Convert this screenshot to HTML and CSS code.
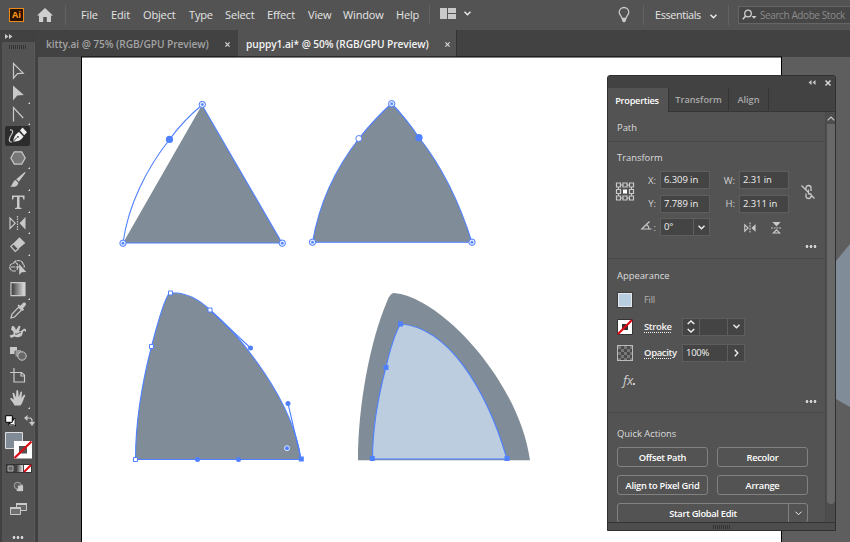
FILE: index.html
```html
<!DOCTYPE html>
<html lang="en">
<head>
<meta charset="utf-8">
<title>Illustrator workspace</title>
<link rel="stylesheet" href="styles.css">
</head>
<body>
<div class="app">
  <header class="menubar">
    <span class="logo">Ai</span>
    <svg class="home" viewBox="0 0 16 14"><path d="M8 0 0 7.6h2V14h4.2V9h3.6v5H14V7.6h2z"/></svg>
    <i class="sep"></i>
    <nav class="menu"><span>File</span><span>Edit</span><span>Object</span><span>Type</span><span>Select</span><span>Effect</span><span>View</span><span>Window</span><span>Help</span></nav>
    <i class="sep"></i>
    <svg class="arrange" viewBox="0 0 16 11"><path d="M0 0h7v11H0zM8 0h8v5H8zM8 6h8v5H8z"/></svg>
    <svg class="chev" viewBox="0 0 7 5"><path d="m.5.7 3 3 3-3"/></svg>
    <svg class="bulb" viewBox="0 0 12 16"><path d="M4 11.5C4 9 1.2 8 1.2 5.3a4.8 4.8 0 0 1 9.6 0C10.800 8 8 9 8 11.500z" fill="none" stroke="#c9c9c9" stroke-width="1.300"/><path d="M4 11h4v3L6 15.500 4 14z" fill="#c9c9c9"/></svg>
    <i class="sep"></i>
    <span class="workspace">Essentials</span>
    <svg class="chev wide" viewBox="0 0 7 5"><path d="m.5.7 3 3 3-3"/></svg>
    <i class="sep"></i>
    <div class="search">
      <svg viewBox="0 0 15 12"><circle cx="6" cy="4.500" r="3.300" fill="none" stroke="#d0d0d0" stroke-width="1.300"/><path d="M3.700 7 .8 10.300" stroke="#d0d0d0" stroke-width="1.500"/><path d="M9.500 7h5L12 9.700z" fill="#d0d0d0"/></svg>
      <span>Search Adobe Stock</span>
    </div>
  </header>

  <div class="workarea">
    <aside class="toolbar">
      <div class="toolhead"><svg viewBox="0 0 8 5"><path d="m0 0 3.500 2.500L0 5zm4 0 3.500 2.500L4 5z"/></svg></div>
      <div class="toolbody">
        <i class="grip"></i>
        <div class="tools">
          <span><svg viewBox="0 0 20 20"><path class="l" d="M5.500 2.500v14.700l4-4.500 5.700-.5z"/></svg></span>
          <span class="more"><svg viewBox="0 0 20 20"><path d="M5 2.500V17.500l4.300-5 6.500-.5z"/></svg></span>
          <span class="more"><svg viewBox="0 0 20 20"><path class="l" d="M5.500 17.500V3.500l9.700 10.500"/></svg></span>
          <span class="on"><svg viewBox="0 0 20 20"><path class="l" d="M2 4c3.500-.5 3 2.500 1.500 4.500C1 12 0 16 4 16"/><path d="M5 15.500c1-5 2.500-7.500 6-9.500l4.500 4.500c-2.500 4-5 5-10.500 5z"/><path d="m12 4.500 2.500-3 4.500 4.800-2.800 3z"/><path d="m5 15.500 4-4" stroke="#303030"/><circle cx="10" cy="10.800" r=".9" fill="#303030"/></svg></span>
          <span class="more"><svg viewBox="0 0 20 20"><path class="l" d="M2.800 10 6.300 3.900h7.400l3.500 6.100-3.500 6.100H6.300z" style="fill:#777"/></svg></span>
          <span class="more"><svg viewBox="0 0 20 20"><path d="m16.800 2 .8.800-6.800 9-2.600-2.600zM7.500 10l2.800 2.700c-.5 4-4 4.500-8.300 4 2.500-1 2.500-5.500 5.500-6.700z"/></svg></span>
          <span class="more"><svg viewBox="0 0 20 20"><path d="M4 3.500h12.500V7.500H15.300L14.600 5h-3.100v10.500l2 .5v1H7v-1l2-.5V5H5.900l-.7 2.500H4z"/></svg></span>
          <span class="more"><svg viewBox="0 0 20 20"><path class="l" d="M2 5v10.500L7.200 10.200z"/><path class="l" d="M9.500 3v14" stroke-dasharray="1.500 1"/><path d="M17.500 4v12.500l-6-6.300z"/></svg></span>
          <span class="more"><svg viewBox="0 0 20 20"><path d="m11.500 2.200 5.800 5.800-6.500 5.500-5.300-5.300z"/><path class="l" d="M5.500 8.800 2.800 11.500l4.500 5 3.200-2.800z"/></svg></span>
          <span><svg viewBox="0 0 20 20"><path class="l" d="M8 14H5.500a3.800 3.800 0 0 1 0-7.600C7.500 2 14.500 3 15 7c1.500 1 1.500 2 1 3.500M3 10h10M7.500 5.500c3 1 3 5 1 8" stroke-dasharray="4 .6"/><path d="M11.200 7v11l2.500-2.800 4.500-.3z"/></svg></span>
          <span class="more"><svg viewBox="0 0 20 20"><defs><linearGradient id="g"><stop stop-color="#333"/><stop offset="1" stop-color="#e5e5e5"/></linearGradient></defs><path d="M3 3.700h14v13H3z" fill="url(#g)" stroke="#c9c9c9" stroke-width="1.200" style="fill:url(#g)"/></svg></span>
          <span><svg viewBox="0 0 20 20"><path class="l" d="m3 17 1-4 6.700-6.800 2.800 2.700L6.500 16z"/><path d="m9.500 4.500 1.200-1 1.600 1.200L15 2c2-1.500 4 .8 2.500 2.500L15 7.300l1 1.500-1.200 1.200z"/></svg></span>
          <span><svg viewBox="0 0 20 20"><path d="M4 4c3 0 3 2 4 4l3-4.500 1.500 1L11 9c2 1 3-1 4.500-2 2-1 3.500 1 2 3l-.7-1c-1.300-1-2 1-2.300 3-.8 3.500-5.500 4-8 2.500L3 16l-1.500-2.500 4-1.300C6 11 5.500 9 3 7.500z"/><path d="M7 12c3 1 4-2 6-1.500" stroke="#535353"/></svg></span>
          <span><svg viewBox="0 0 20 20"><path d="M2 3h7v7H2z"/><path d="M7 6h6l1 7H7z" fill="#999"/><path d="M7 7v6h3" stroke="#535353" fill="none"/><circle cx="14" cy="12" r="4.200" stroke="#c9c9c9" style="fill:#686868"/></svg></span>
          <span><svg viewBox="0 0 20 20"><path class="l" d="M2 6.500h4M6 2v4.500m0 0h7.500L16.500 9v7H6zM13 6.500V10h3.500"/></svg></span>
          <span class="more"><svg viewBox="0 0 20 20"><path d="M6.500 17.500C5 14 3 12.500 2 10.500c.6-1 1.800-.6 3.800 1.200L4.500 5.500c.3-1.200 1.500-1 1.800 0L8 9.500 8.300 3c.3-1.200 1.700-1.200 1.900 0l.6 6.200L12.500 4c.5-1 1.800-.6 1.600.6L13.400 10l2.300-3c.8-.8 2 0 1.400 1-2 3.500-2 6.500-4.600 9.500z"/></svg></span>
        </div>
        <div class="defaults">
          <svg viewBox="0 0 11 11"><path d="M4.500 4.500h5.500v5.500H4.500z" stroke="#000" stroke-width="2" style="fill:#fff"/><path d="M.7.700h6.600v6.600H.7z" stroke="#000" style="fill:#fff"/><path d="M9.800 4v6H4" stroke="#ddd" style="fill:none"/></svg>
          <svg viewBox="0 0 11 11"><path class="l" d="M3 3h2.500Q8 3 8 5.500V8"/><path d="M3.500 0v6L0 3zM5 7h6l-3 4z"/></svg>
        </div>
        <svg class="swatches" viewBox="0 0 28 28"><path d="M.5.500h17v16H.5z" stroke="#ddd" style="fill:#808b97"/><path d="M9 9h18v17.500H9z" style="fill:#fff"/><path d="M14 14h8v7.500h-8z" style="fill:#535353"/><path d="M9.500 26 26.500 9.500" stroke="#e00a14" stroke-width="2.200"/></svg>
        <svg class="modes" viewBox="0 0 26 9"><path d="M.5.500h25v8H.5z" stroke="#333" style="fill:#414141"/><path d="M2 2h5v5H2z" stroke="#aaa" style="fill:#666"/><path d="M10 1h7v7h-7z" style="fill:url(#g)"/><path d="M18 1h7v7h-7z" style="fill:#fff"/><path d="m18 8 7-7" stroke="#e00a14" stroke-width="2"/></svg>
        <svg class="draw" viewBox="0 0 12 12"><path d="M4 4h6.500v7H4z"/><circle cx="5" cy="5" r="3.700" stroke="#aaa" style="fill:#606060"/><path d="M5.500 5h5.500v6H5.500z"/></svg>
        <svg class="screen" viewBox="0 0 17 12"><path d="M6.500.500h10v7h-10z" stroke="#c9c9c9" style="fill:#666"/><path d="M.5 4.500h10v7H.5z" stroke="#c9c9c9" style="fill:#707070"/><path d="M0 4h11v2H0zM6 0h11v2H6z"/></svg>
        <i class="dots"></i>
      </div>
    </aside>

    <main class="document">
      <div class="doctabs">
        <div class="doctab"><span>kitty.ai @ 75% (RGB/GPU Preview)</span><svg viewBox="0 0 6 6"><path d="m.5.500 5 5m0-5-5 5"/></svg></div>
        <div class="doctab current"><span>puppy1.ai* @ 50% (RGB/GPU Preview)</span><svg viewBox="0 0 6 6"><path d="m.5.500 5 5m0-5-5 5"/></svg></div>
      </div>
      <svg class="canvas" viewBox="38 57 812 485">
        <defs>
          <g id="corner"><circle r="3.200" fill="#dce6ff" stroke="#4f80ff" stroke-width="1"/><circle r="1.300" fill="#4f80ff"/></g>
          <circle id="dot" r="2.500" fill="#4f80ff"/>
          <path id="sq" d="M-2.500-2.500h5v5h-5z" fill="#4f80ff"/>
          <path id="osq" d="M-2-2h4v4h-4z" fill="#fff" stroke="#4f80ff"/>
        </defs>
        <path d="M38 57h812v485H38z" fill="#5e5e5e"/>
        <path d="M81 56.500h701V542h-701z" fill="#000"/>
        <path d="M82 57.500h699V542H82z" fill="#fff"/>
        <path d="M850 244 836 261v138l14 8z" fill="#808d98"/>
        <g>
          <path class="grey" d="M202 105 123 243h159z"/>
          <path class="edge" d="M123 243h159L202 105C190 115 180 125 169.500 139.500 147 168 128 205 123 243z"/>
          <use href="#corner" x="202.300" y="104.500"/><use href="#corner" x="123" y="243.200"/><use href="#corner" x="282.300" y="243.200"/><circle cx="169.500" cy="139.400" r="3.600" fill="#4f80ff"/>
        </g>
        <g>
          <path class="grey edge" d="M312.500 242.300C319 204 335 169 359 138.500 368 127 379 115 391.500 103.500 401 113 409 123 419 137.500 443 168 460 204 472 242.300z"/>
          <use href="#corner" x="391.700" y="103.700"/><use href="#corner" x="312.500" y="242.200"/><use href="#corner" x="472" y="242.200"/><circle cx="419" cy="137.700" r="3.600" fill="#4f80ff"/><circle cx="358.800" cy="138.500" r="3" fill="#fff" stroke="#4f80ff"/>
        </g>
        <g>
          <path class="grey edge" d="M135.500 459.500C135.500 425 141 387 151.500 346.500 157 325 163 305 167.500 296Q169 292.500 173 292.700C187 293 200 300 210 310 241 336 293 401 301 459.500z"/>
          <path class="edge" d="m210 310 40.500 38M301 459l-13-55.500"/>
          <use href="#osq" x="170.500" y="293"/><use href="#osq" x="210" y="310"/><use href="#osq" x="151.500" y="346.500"/><use href="#osq" x="135.500" y="459.500"/>
          <use href="#sq" x="301.300" y="459"/><use href="#dot" x="250.500" y="348"/><use href="#dot" x="288" y="403.500"/><use href="#dot" x="197.500" y="459.500"/><use href="#dot" x="238.500" y="459.500"/>
          <circle cx="287" cy="448.200" r="2.500" fill="#4f80ff" stroke="#dce6ff"/>
        </g>
        <g>
          <path class="grey" d="M358 460.300C358 406 370 341 387 301.500Q390 293 394 293C441 297 519 381 530 460.300z"/>
          <path class="pale edge" d="M372.500 459C372.500 430 377 401 386 367 390 350 394 335 400.500 324 447 327 486 387 507 459z"/>
          <use href="#sq" x="400.500" y="324"/><use href="#sq" x="386" y="367.500"/><use href="#sq" x="372.300" y="458.500"/><use href="#sq" x="507" y="458.500"/>
        </g>
      </svg>

      <section class="panel">
        <div class="panelhead">
          <svg class="collapse" viewBox="0 0 8 5"><path d="M3.500 0 .5 2.500l3 2.500zM7.500 0l-3 2.500 3 2.500z"/></svg>
          <svg class="close" viewBox="0 0 6 6"><path d="m.5.500 5 5m0-5-5 5"/></svg>
        </div>
        <div class="paneltabs"><span class="active">Properties</span><span>Transform</span><span>Align</span></div>
        <div class="panelbody">
          <div class="sections">
            <div class="sect path"><h3>Path</h3></div>
            <div class="sect transform">
              <h3>Transform</h3>
              <div class="tgrid">
                <svg class="refpoint" viewBox="0 0 18 19"><path class="l" d="M.5 1h4v4h-4zM7 1h4v4H7zM13.500 1h4v4h-4zM.5 7.500h4v4h-4zM13.500 7.500h4v4h-4zM.5 14h4v4h-4zM7 14h4v4H7zM13.500 14h4v4h-4zM4.500 3H7m4 0h2.500m-9 13H7m4 0h2.500m-11-11v2.500m0 4V14m13-9v2.500m0 4V14"/><path d="M7 7.500h4v4H7z" style="fill:#fff"/></svg>
                <label class="x">X:</label><b class="fx1">6.309 in</b>
                <label class="w">W:</label><b class="fw1">2.31 in</b>
                <label class="y">Y:</label><b class="fy1">7.789 in</b>
                <label class="h">H:</label><b class="fh1">2.311 in</b>
                <svg class="chain" viewBox="0 0 14 16"><path class="l" d="M5 7V4a2.500 2.500 0 0 1 5 0v3M5 9.500V12a2.500 2.500 0 0 0 5 0V9.500M7.500 5.500v5M.5 1.500l13 13" style="stroke-width:1.300"/></svg>
                <label class="angle"><svg viewBox="0 0 11 9"><path class="l" d="M8.500.500.8 8h9.700M5.500 3.500Q8 5 8 8"/></svg>:</label>
                <b class="fa">0°<i><svg class="chev" viewBox="0 0 7 5"><path d="m.5.700 3 3 3-3"/></svg></i></b>
                <div class="flips">
                  <svg viewBox="0 0 13 12"><path class="l" d="M.8 2.500v7l3.700-3.500z"/><path class="l" d="M6.500 0v12" stroke-dasharray="2 1"/><path d="M12.500 2v8L8 6z"/></svg>
                  <svg viewBox="0 0 12 13"><path d="M1.500 0h9L6 4.800z"/><path class="l" d="M0 6.500h12" stroke-dasharray="2 1"/><path class="l" d="M2.500 12h7L6 8.500z"/></svg>
                </div>
              </div>
              <i class="dots"></i>
            </div>
            <div class="sect appearance">
              <h3>Appearance</h3>
              <div class="arow"><i class="fillsw"></i><span class="dim">Fill</span></div>
              <div class="arow"><svg class="sw" viewBox="0 0 16 16"><path d="M.5.500h15v15H.5z" stroke="#333" style="fill:#fff"/><path d="M5 5h6v6H5z" style="fill:#333"/><path d="M1 15 15 1" stroke="#e00a14" stroke-width="2.200"/></svg><span class="u">Stroke</span>
                <div class="combo"><i class="step"><svg viewBox="0 0 8 13"><path class="l" d="m.7 4 3.300-3 3.300 3M.7 9 4 12l3.300-3" style="stroke:#eee;stroke-width:1.500"/></svg></i><em></em><i><svg class="chev" viewBox="0 0 7 5"><path d="m.5.700 3 3 3-3"/></svg></i></div></div>
              <div class="arow"><i class="checker"></i><span class="u">Opacity</span>
                <div class="combo"><em class="val">100%</em><i><svg class="right" viewBox="0 0 5 8"><path d="m.8.700 3 3.300-3 3.300"/></svg></i></div></div>
              <div class="fx">fx<i></i></div>
              <i class="dots"></i>
            </div>
            <div class="sect actions">
              <h3>Quick Actions</h3>
              <div class="buttons"><button>Offset Path</button><button>Recolor</button><button>Align to Pixel Grid</button><button>Arrange</button>
                <div class="split"><button>Start Global Edit</button><button><svg class="chev thin" viewBox="0 0 7 5"><path d="m.5.700 3 3 3-3"/></svg></button></div></div>
            </div>
          </div>
          <div class="scroll"><svg viewBox="0 0 8 5"><path class="l" d="m.7 4.300 3.300-3.300 3.300 3.300"/></svg><i></i></div>
        </div>
        <div class="panelfoot"><i class="grip"></i></div>
      </section>
    </main>
  </div>
</div>
</body>
</html>
```

FILE: styles.css
```css
* { box-sizing: border-box; }
body { margin: 0; font-family: "Open Sans", "Noto Sans", sans-serif; color: #dedede; background: #424242; overflow: hidden; }
svg { display: block; flex: none; fill: #c9c9c9; overflow: visible; }
i, em, b { font-style: normal; font-weight: 400; }
.l { fill: none; stroke: #c9c9c9; stroke-width: 1.2; }
.chev, .chev.wide { width: 7px; height: 5px; }
.chev path, .right path { fill: none; stroke: #eee; stroke-width: 1.4; }
.app { width: 850px; height: 542px; display: flex; flex-direction: column; }

.menubar { height: 30px; background: #535353; display: flex; align-items: center; flex: none; overflow: hidden; }
.logo { width: 15px; height: 14px; margin-left: 9px; background: #2b1302; border: 1px solid #ee8a17; color: #f79319; font-size: 9px; font-weight: 700; line-height: 12px; text-align: center; flex: none; }
.home { width: 16px; height: 14px; margin-left: 13px; fill: #cfcfcf; }
.sep { width: 1px; height: 20px; background: #626262; margin-left: 12px; flex: none; }
.menu { display: grid; grid-template-columns: 30px 32px 46px 36px 42px 41px 35px 53px 23px; margin: -2px 0 0 15px; font-size: 11px; color: #e4e4e4; letter-spacing: -.15px; white-space: nowrap; }
.menu + .sep { margin-left: 10px; }
.arrange { width: 16px; height: 11px; margin: -3px 8px 0 10px; }
.arrange + .chev { margin-top: -3px; }
.bulb { width: 12px; height: 16px; margin: -1px 0 0 147px; }
.bulb + .sep { margin-left: 13px; }
.workspace { margin: -1px 0 0 11px; width: 46px; font-size: 10.800px; letter-spacing: -.35px; white-space: nowrap; color: #e4e4e4; }
.chev.wide { margin: 2px 0 0 9px; }
.wide + .sep { margin-left: 11px; }
.search { width: 125px; height: 18px; margin-left: 9px; flex: none; border: 1px solid #656565; background: #464646; display: flex; align-items: center; padding-left: 3px; color: #8b8b8b; font-size: 10px; letter-spacing: -.4px; white-space: nowrap; }
.search svg { width: 15px; height: 12px; margin-right: 3px; }

.workarea { display: flex; flex: 1; min-height: 0; }
.toolbar { width: 38px; background: #414141; flex: none; display: flex; flex-direction: column; }
.toolhead { height: 12px; padding: 4px 0 0 5px; }
.toolhead svg { width: 8px; height: 5px; }
.toolbody { flex: 1; margin: 0 3px 0 2px; background: #535353; display: flex; flex-direction: column; border-right: 1px solid #5b5b5b; }
.grip { display: block; width: 18px; height: 4px; background: repeating-linear-gradient(90deg, #343434 0 1px, transparent 1px 2px); }
.toolbody .grip { margin: 3px 0 11px 7px; flex: none; }
.tools { display: grid; grid-auto-rows: 21.8px; padding-left: 3px; }
.tools span { width: 25px; height: 20px; display: flex; align-items: center; justify-content: center; align-self: center; position: relative; border-radius: 2px; }
.tools svg { width: 20px; height: 20px; margin-left: 1px; }
.tools .on { background: #2c2c2c; }
.tools .on svg { fill: #eee; }
.more::after { content: ""; position: absolute; right: 0; bottom: -1px; border: 1.5px solid transparent; border-right-color: #ddd; border-bottom-color: #ddd; width: 0; height: 0; }
.defaults { display: flex; gap: 8px; margin: 6.500px 0 0 3px; flex: none; }
.defaults svg { width: 11px; height: 11px; }
.swatches { width: 28px; height: 28px; margin: 6px 0 0 3px; }
.modes { width: 26px; height: 9px; margin: 4px 0 0 4px; }
.draw { width: 11px; height: 11px; margin: 8px 0 0 11px; }
.screen { width: 17px; height: 12px; margin: 11px 0 0 8px; }
.dots { display: block; width: 12px; height: 3px; background: radial-gradient(circle, #d0d0d0 1.2px, transparent 1.7px) 0 0 / 4px 3px; }
.toolbody > .dots { margin: 21px 0 0 10px; }

.document { flex: 1; position: relative; display: flex; flex-direction: column; min-width: 0; }
.doctabs { height: 27px; background: #424242; display: flex; flex: none; font-size: 10.200px; font-weight: 600; color: #a3a3a3; }
.doctab { display: flex; align-items: center; width: 200px; padding: 1px 8px 0 8px; justify-content: space-between; white-space: nowrap; letter-spacing: -.08px; }
.doctab svg { width: 5px; height: 5px; }
.doctab path, .close path { fill: none; stroke: #d5d5d5; stroke-width: 1.500; }
.doctab.current { width: 219px; background: #535353; color: #f2f2f2; padding: 1px 6px 0 8px; border-right: 1px solid #333; }
.canvas { width: 812px; height: 485px; }
.grey { fill: #808c97; }
.pale { fill: #bbcdde; }
.edge { stroke: #4f80ff; stroke-width: 1.1; }
.edge:not(.grey):not(.pale) { fill: none; }

.panel { position: absolute; left: 569px; top: 45px; width: 229px; height: 456px; background: #535353; border: 1px solid #303030; border-radius: 3px 3px 0 0; display: flex; flex-direction: column; font-size: 9.500px; overflow: hidden; }
.panelhead { height: 12px; background: #424242; display: flex; justify-content: flex-end; align-items: center; gap: 9px; padding: 1px 4px 0 0; flex: none; }
.collapse { width: 8px; height: 5px; }
.close { width: 6px; height: 6px; }
.paneltabs { height: 24px; background: #424242; display: flex; color: #a9a9a9; font-weight: 600; font-size: 9.200px; border-bottom: 1px solid #363636; flex: none; }
.paneltabs span { display: flex; align-items: center; justify-content: center; border-right: 1px solid #353535; width: 60px; white-space: nowrap; }
.paneltabs span:last-child { width: 40px; }
.paneltabs .active { color: #fff; background: #535353; width: 61px; height: 24px; padding-right: 2px; letter-spacing: -.25px; }
.panelbody { flex: 1; display: flex; min-height: 0; overflow: hidden; }
.sections { width: 217px; flex: none; }
.sect { border-bottom: 1px solid #484848; padding-left: 9px; }
.sect h3 { margin: 0; font-size: 9.400px; line-height: 12px; font-weight: 400; color: #dcdcdc; }
.path { height: 30px; padding-top: 10px; }
.transform { height: 117px; padding-top: 10px; }
.tgrid { display: grid; grid-template-columns: 28px 15px 57px 22px 50px auto; grid-template-rows: 18px 18px 18px; row-gap: 5.500px; margin-top: 7px; height: 67px; }
.tgrid label { justify-self: end; align-self: center; padding-right: 4px; color: #cfcfcf; }
.tgrid b, .combo { background: #444; border: 1px solid #5e5e5e; }
.tgrid b { width: 50px; height: 18px; padding-left: 3px; line-height: 16px; color: #f0f0f0; white-space: nowrap; letter-spacing: -.1px; }
.refpoint { width: 18px; height: 19px; grid-row: 1 / 3; align-self: center; margin-left: -1px; }
.x, .y, .angle { grid-column: 2; }
.fx1, .fy1, .fa { grid-column: 3; }
.w, .h { grid-column: 4; }
.x, .fx1, .w, .fw1 { grid-row: 1; }
.y, .fy1, .h, .fh1 { grid-row: 2; }
.angle, .fa, .flips { grid-row: 3; }
.angle { display: flex; gap: 2px; }
.angle svg { width: 11px; height: 9px; }
.tgrid .fa { display: flex; justify-content: space-between; }
.fa i { width: 16px; border-left: 1px solid #5e5e5e; display: grid; place-items: center; }
.chain { width: 14px; height: 16px; grid-column: 6; grid-row: 1 / 3; align-self: center; margin-left: 12px; }
.flips { grid-column: 5; display: flex; align-items: center; gap: 15px; margin: 2px 0 0 5px; }
.flips svg:first-child { width: 12px; height: 12px; }
.flips svg:last-child { width: 11px; height: 12px; }
.sect > .dots { margin-left: 188px; }
.transform > .dots { margin-top: 7px; }
.appearance { height: 154px; padding-top: 11px; }
.arow { height: 26.500px; display: flex; align-items: center; }
.appearance h3 { margin-bottom: 5px; }
.fillsw { width: 16px; height: 16px; background: #b9cde0; border: 1px solid #3e3e3e; box-shadow: inset 0 0 0 1px #e8e8e8; }
.sw { width: 16px; height: 16px; }
.checker { width: 16px; height: 16px; border: 1px solid #bbb; background: repeating-conic-gradient(#4a4a4a 0 25%, #777 0 50%) 0 0 / 6px 6px; }
.arow > span { margin-left: 11px; width: 38px; white-space: nowrap; line-height: 12px; }
.dim { color: #b0b0b0; letter-spacing: -.3px; }
.u { color: #f4f4f4; font-weight: 600; letter-spacing: -.35px; text-decoration: underline dotted; text-underline-offset: 2px; }
.combo { width: 63px; height: 18px; display: flex; }
.combo i { width: 16px; display: grid; place-items: center; }
.combo em { flex: 1; border: solid #5e5e5e; border-width: 0 1px; line-height: 16px; }
.combo .val { border-left: 0; padding-left: 3px; color: #f4f4f4; letter-spacing: -.3px; }
.step svg { width: 8px; height: 13px; }
.right { width: 5px; height: 8px; }
.fx { margin: 3px 0 0 6px; font: italic 13px/20px "Open Sans", sans-serif; height: 20px; display: flex; align-items: flex-end; color: #ccc; }
.fx i { width: 2px; height: 2px; background: #ccc; margin-bottom: 5px; }
.appearance > .dots { margin-top: 10px; }
.actions { padding-top: 15px; }
.buttons { display: grid; grid-template-columns: 91px 91px; gap: 8px 9px; margin-top: 7px; }
button { height: 20px; border: 1px solid #818181; border-radius: 3px; background: none; color: #fff; font: 600 9.300px "Open Sans", sans-serif; letter-spacing: -.3px; padding: 0; white-space: nowrap; }
.split { grid-column: 1 / 3; display: flex; }
.split button:first-child { flex: 1; border-radius: 3px 0 0 3px; }
.split button:last-child { width: 20px; margin-left: -1px; display: grid; place-items: center; border-radius: 0 3px 3px 0; }
.chev.thin path { stroke-width: 1; }
.scroll { flex: 1; border-left: 1px solid #484848; background: #4d4d4d; display: flex; flex-direction: column; align-items: center; padding-top: 4px; }
.scroll svg { width: 8px; height: 5px; }
.scroll i { width: 8px; height: 380px; flex: none; margin-top: 3px; background: #686868; border-radius: 0 0 4px 4px; }
.panelfoot { height: 8px; border-top: 1px solid #333; flex: none; display: grid; place-items: center; background: #4d4d4d; }
```
